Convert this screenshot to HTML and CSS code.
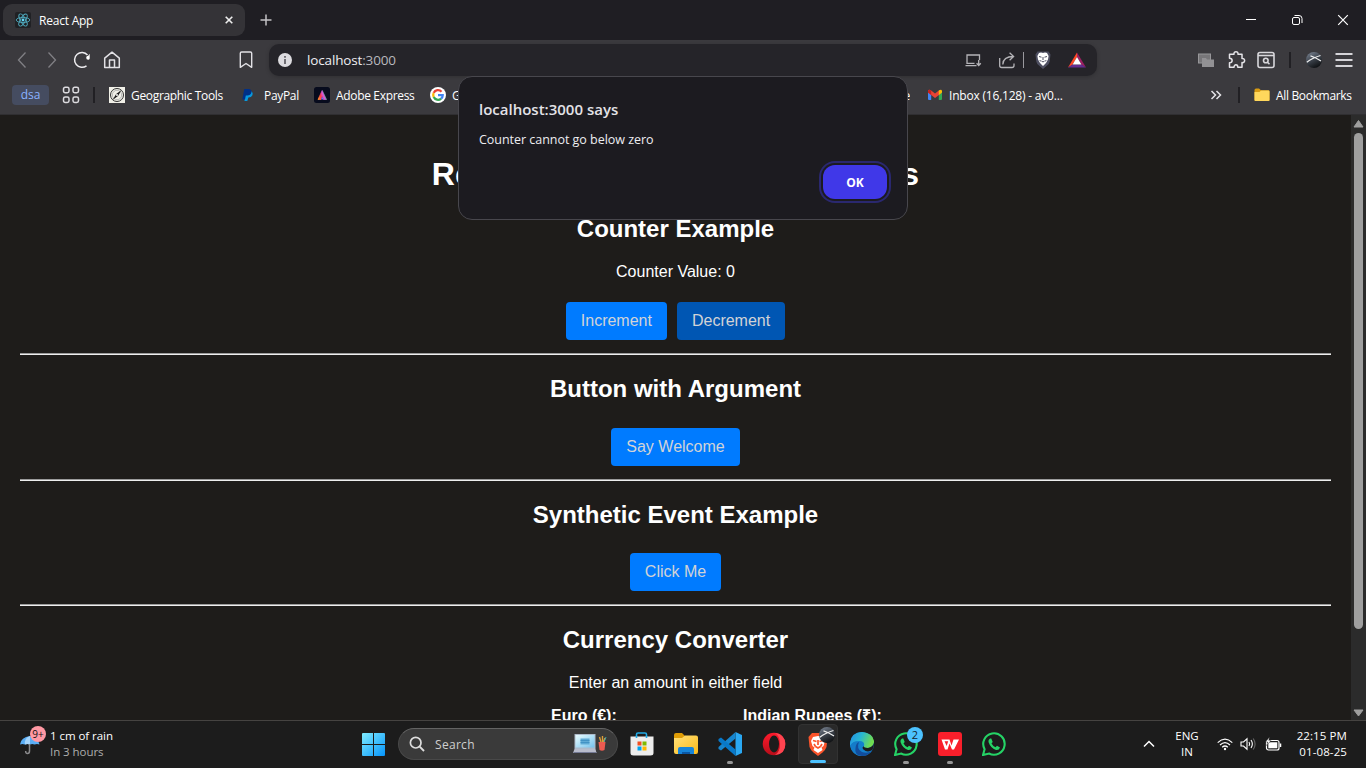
FILE: index.html
```html
<!DOCTYPE html>
<html lang="en">
<head>
<meta charset="utf-8">
<title>React App</title>
<link rel="stylesheet" href="styles.css">
</head>
<body>
<div class="desktop">
  <header class="titlebar">
    <div class="tab">
      <svg class="tab-icon" width="16" height="16" viewBox="0 0 16 16"><rect width="16" height="16" rx="2" fill="#202124"/><g fill="none" stroke="#4fa9bd" stroke-width=".9"><ellipse cx="8" cy="8" rx="6.8" ry="2.6"/><ellipse cx="8" cy="8" rx="6.8" ry="2.6" transform="rotate(60 8 8)"/><ellipse cx="8" cy="8" rx="6.8" ry="2.6" transform="rotate(120 8 8)"/></g><circle cx="8" cy="8" r="1.4" fill="#61dafb"/></svg>
      <span class="tab-title">React App</span>
      <svg class="tab-close" width="8" height="8" viewBox="0 0 8 8"><path d="M.7.7l6.6 6.6M7.3.7L.7 7.3" stroke="#eee" stroke-width="1.6"/></svg>
    </div>
    <svg class="new-tab" width="12" height="12" viewBox="0 0 12 12"><path d="M6 .5v11M.5 6h11" stroke="#c3c2c5" stroke-width="1.5"/></svg>
    <div class="window-controls">
      <svg width="46" height="40" viewBox="0 0 46 40"><path d="M18 19.5h10" stroke="#fff"/></svg>
      <svg width="46" height="40" viewBox="0 0 46 40" fill="none" stroke="#fff"><rect x="18.5" y="17.500" width="7" height="7" rx="1.500"/><path d="M20.500 15.500h4.500a3 3 0 0 1 3 3v4.500"/></svg>
      <svg width="46" height="40" viewBox="0 0 46 40"><path d="M18.200 15.200l9.600 9.600M27.800 15.200l-9.600 9.600" stroke="#fff" stroke-width="1.200"/></svg>
    </div>
  </header>

  <nav class="toolbar">
    <span class="tool"><svg width="20" height="20" viewBox="0 0 20 20"><path d="M13.500 2.500L6.500 10l7 7.500" fill="none" stroke="#818085" stroke-width="1.300"/></svg></span>
    <span class="tool"><svg width="20" height="20" viewBox="0 0 20 20"><path d="M6.500 2.500l7 7.500-7 7.500" fill="none" stroke="#818085" stroke-width="1.300"/></svg></span>
    <span class="tool"><svg width="20" height="20" viewBox="0 0 20 20"><path d="M15.500 5A7.400 7.400 0 1 0 14.500 15.800" fill="none" stroke="#eeedf0" stroke-width="1.500"/><path d="M17.700 3.800v4.700q-.2 1.300-1.500 1.300-2 0-2-2t2-2z" fill="#fff"/></svg></span>
    <span class="tool"><svg width="20" height="20" viewBox="0 0 20 20"><path d="M2.700 8.200L10 2.200l7.300 6v9.300H2.700z M7.500 17v-7h5v7" fill="none" stroke="#e2e1e5" stroke-width="1.500" stroke-linejoin="round"/></svg></span>
    <span class="tool tool-bookmark"><svg width="20" height="20" viewBox="0 0 20 20"><path d="M5.600 2.200h8.800q1.300 0 1.300 1.300v14L10 13.700l-5.700 3.800v-14q0-1.300 1.300-1.300z" transform="translate(0 -.2)" fill="none" stroke="#e2e1e5" stroke-width="1.400" stroke-linejoin="round"/></svg></span>
    <div class="address">
      <svg class="info" width="14" height="14" viewBox="0 0 14 14"><circle cx="7" cy="7" r="7" fill="#dddce0"/><path d="M7 3v1.700M7 6v5" stroke="#55545a" stroke-width="1.600"/></svg>
      <span class="url">localhost<span class="port">:3000</span></span>
      <div class="address-tools">
        <span class="tool"><svg width="20" height="20" viewBox="0 0 20 20" fill="none" stroke="#b5b4b8" stroke-width="1.300"><path d="M11.500 13.300H4V5h12.500v5M2.500 15.600h11M15.700 10v5.500M13.600 13.300l2.100 2.200 2.100-2.200"/></svg></span>
        <span class="tool tool-share"><svg width="20" height="20" viewBox="0 0 20 20" fill="none" stroke="#b5b4b8" stroke-width="1.300"><path d="M2.700 8v7.500q0 2 2 2H15q2 0 2-2v-2M5.800 14.500Q6 6.500 16.500 6.500M12.600 2.800l4 3.700-4 3.800"/></svg></span>
        <span class="address-sep"></span>
        <span class="tool tool-shield"><svg width="20" height="20" viewBox="0 0 20 20"><path d="M4.500 1.500h11l2 3-.8 7q-.5 2.500-2.700 4L10 19l-4-3.500q-2.200-1.500-2.700-4l-.8-7z" fill="#4d4e60"/><path d="M6 3l2-.4 2 .4 2-.4L14 3l1.600 3-.6 3.500-2 3.500L10 16l-3-3-2-3.500L4.400 6z" fill="#fff"/><path d="M6 6.500l2.500.7M14 6.500l-2.500.7M10 7v3M8.500 11l1.500 1 1.500-1M6.800 10l1 1.500M13.200 10l-1 1.500" stroke="#4d4e60" fill="none"/></svg></span>
        <span class="tool tool-bat"><svg width="20" height="18" viewBox="0 0 20 18"><path d="M10 1.500L1 16.500l4.500-2.700L10 6z" fill="#ff4724"/><path d="M10 1.500l9 15-4.500-2.700L10 6z" fill="#9e1f63"/><path d="M1 16.500h18l-4.500-3h-9z" fill="#662d91"/><path d="M10 6l4.400 7.600H5.600z" fill="#fff"/></svg></span>
      </div>
    </div>
    <div class="extensions">
      <span class="tool"><svg width="18" height="16" viewBox="0 0 18 16"><rect x="1.500" y="2" width="12" height="9" fill="#777679" stroke="#98979a"/><path d="M5 6h4l1 1.500h7V15H5z" fill="#929194"/></svg></span>
      <span class="tool"><svg width="20" height="20" viewBox="0 0 20 20"><path d="M3 4.500h4.500c-.5-3.500 4.500-3.500 4 0h4v4.300c3.500-.8 3.500 4.600 0 4v4.700h-4.200c0-3.300-3.800-3.300-3.800 0H3V13c3.500 0 3.500-4.500 0-4.500z" transform="translate(.5 -.2)" fill="none" stroke="#e5e4e8" stroke-width="1.500" stroke-linejoin="round"/></svg></span>
      <span class="tool"><svg width="20" height="20" viewBox="0 0 20 20" fill="none" stroke="#d8d7db" stroke-width="1.600"><rect x="2" y="2.500" width="16" height="15" rx="2"/><path d="M2 5.500h16"/><circle cx="9.800" cy="10.500" r="2.300"/><path d="M11.500 12.200l2 2"/></svg></span>
      <span class="divider"></span>
      <span class="tool"><svg width="16" height="16" viewBox="0 0 16 16"><defs><linearGradient id="orb" x1=".2" x2=".7" y2="1"><stop stop-color="#76808f"/><stop offset=".5" stop-color="#3a4049"/><stop offset="1" stop-color="#0b0d0f"/></linearGradient></defs><circle cx="8" cy="8" r="8" fill="url(#orb)"/><path d="M.8 10.200Q6 6 14.500 3.500M4.500 3.800Q9 5 15 9" fill="none" stroke="#eee" stroke-width="1.200"/></svg></span>
      <span class="tool"><svg width="18" height="16" viewBox="0 0 18 16"><path d="M.5 2h17M.5 8h17M.5 14h17" stroke="#d5d4d8" stroke-width="2"/></svg></span>
    </div>
  </nav>

  <nav class="bookmarks">
    <span class="group-chip">dsa</span>
    <svg class="apps" width="18" height="18" viewBox="0 0 18 18" fill="none" stroke="#dcdbdf" stroke-width="1.500"><rect x="1.500" y="1.200" width="5.500" height="5.500" rx="1.700"/><rect x="11" y="1.200" width="5.500" height="5.500" rx="1.700"/><rect x="1.500" y="11" width="5.500" height="5.500" rx="1.700"/><rect x="11" y="11" width="5.500" height="5.500" rx="1.700"/></svg>
    <span class="divider divider-left"></span>
    <a class="bookmark geo"><svg width="16" height="16" viewBox="0 0 16 16"><rect width="16" height="16" fill="#f1f0e8"/><circle cx="8" cy="8" r="6.500" fill="none" stroke="#303030"/><circle cx="8" cy="8" r="4.700" fill="none" stroke="#aaa" stroke-width=".8"/><path d="M12.500 3L9 9 3.500 13l3.700-6z" fill="#181818"/><circle cx="8" cy="8" r="1" fill="#fff"/></svg><span>Geographic Tools</span></a>
    <a class="bookmark paypal"><svg width="16" height="16" viewBox="0 0 16 16"><path d="M5 4.500h6.800q1.500 1.500.6 3.700-1 2.300-4 2.300L7.300 14H4.500z" fill="#0799df"/><path d="M4.300 2h4.700q3.200.5 2.400 3.500-.8 3-4.200 3H5.800L5 12.500H2.300z" fill="#003087"/></svg><span>PayPal</span></a>
    <a class="bookmark adobe"><svg width="16" height="16" viewBox="0 0 16 16"><defs><linearGradient id="ax" x1="0" y1="1" x2="1" y2=".6"><stop stop-color="#ff9d2e"/><stop offset=".4" stop-color="#ff3a45"/><stop offset=".7" stop-color="#d655df"/><stop offset="1" stop-color="#3ad06b"/></linearGradient></defs><rect width="16" height="16" rx="2.500" fill="#070b1d"/><path d="M8.200 3.500l4.300 9h-3L8.200 9 7 12.500H4z" fill="url(#ax)" stroke="url(#ax)" stroke-width=".8"/><path d="M8 9.500l2 3H7.200z" fill="#6c6dff"/></svg><span>Adobe Express</span></a>
    <a class="bookmark google"><svg width="16" height="16" viewBox="0 0 16 16"><circle cx="8" cy="8" r="8" fill="#fff"/><g fill="none" stroke-width="2.300"><path d="M3.700 5.900A4.700 4.700 0 0 1 11.500 4.700" stroke="#ea4335"/><path d="M3.700 10.100A4.700 4.700 0 0 1 3.700 5.900" stroke="#fbbc05"/><path d="M11.100 11.600a4.700 4.700 0 0 1-7.400-1.500" stroke="#34a853"/><path d="M8 8.200h4.700q0 2.200-1.600 3.400" stroke="#4285f4"/></g></svg><span>Google</span></a>
    <a class="bookmark covered"><span>YouTube</span></a>
    <a class="bookmark mail"><svg width="16" height="16" viewBox="0 0 16 16"><path d="M1 4.500L4.200 6.500V13H2q-1 0-1-1z" fill="#4285f4"/><path d="M15 4.500l-3.200 2V13H14q1 0 1-1z" fill="#34a853"/><path d="M1 4q.5-2 2.500-1L8 6.500 12.500 3l1.500 3.500L8 11 1 5.500z" fill="#ea4335"/><path d="M11.800 3.600Q14.500 1.500 15 4v1.500l-3.200 2.400z" fill="#fbbc04"/><path d="M1 4q.5-2 3.200-.5v4.400L1 5.500z" fill="#c5221f"/></svg><span>Inbox (16,128) - av0...</span></a>
    <svg class="more" width="12" height="12" viewBox="0 0 12 12"><path d="M1.500 2l4 4-4 4M6.500 2l4 4-4 4" fill="none" stroke="#e5e4e8" stroke-width="1.500"/></svg>
    <span class="divider divider-right"></span>
    <a class="bookmark all"><svg width="16" height="16" viewBox="0 0 16 16"><path d="M.5 3q0-1.500 1.500-1.500h3L7 3.300h7.500q1 0 1 1V13q0 1-1 1h-13q-1 0-1-1z" fill="#d99b12"/><path d="M.5 5h5L7 3.600h7.500q1 0 1 1V13q0 1-1 1h-13q-1 0-1-1z" fill="#ffd75c"/></svg><span>All Bookmarks</span></a>
  </nav>

  <div class="viewport">
    <main class="page">
      <h1>React Event Handling Examples</h1>
      <section>
        <h2>Counter Example</h2>
        <p>Counter Value: 0</p>
        <div class="actions"><button>Increment</button><button class="pressed">Decrement</button></div>
      </section>
      <hr>
      <section>
        <h2>Button with Argument</h2>
        <div class="actions"><button>Say Welcome</button></div>
      </section>
      <hr>
      <section>
        <h2>Synthetic Event Example</h2>
        <div class="actions"><button>Click Me</button></div>
      </section>
      <hr>
      <section>
        <h2>Currency Converter</h2>
        <p>Enter an amount in either field</p>
        <div class="fields"><label>Euro (€):</label><label>Indian Rupees (₹):</label></div>
      </section>
    </main>
    <div class="scrollbar">
      <svg width="15" height="18" viewBox="0 0 15 18"><path d="M7.500 5.500L12 12H3z" fill="#9f9f9f" stroke="#9f9f9f" stroke-linejoin="round"/></svg>
      <span class="thumb"></span>
      <svg class="arrow-down" width="15" height="15" viewBox="0 0 15 15"><path d="M3 5h9l-4.500 6z" fill="#9f9f9f" stroke="#9f9f9f" stroke-linejoin="round"/></svg>
    </div>
  </div>

  <footer class="taskbar">
    <div class="weather">
      <div class="weather-icon"><svg width="22" height="22" viewBox="0 0 22 22"><path d="M1 11.500Q2 4 11 3q8 1 9.500 8.500-2.500-1-5 0-2.200-1-4.600 0-2.500-1-5 0-2.500-1-4.900 0z" fill="#5aaef5"/><path d="M11 3Q5 5 6 11.500q2.500-1 5 0z" fill="#a5d5fc"/><path d="M10.500 11v7q0 2.500-2 2.500T6.700 18" fill="none" stroke="#8a8a8c" stroke-width="1.500"/></svg><span class="weather-badge">9+</span></div>
      <div class="weather-text"><span>1 cm of rain</span><span class="muted">In 3 hours</span></div>
    </div>
    <svg class="start" width="23" height="23" viewBox="0 0 23 23"><defs><linearGradient id="win" x2="1" y2="1"><stop stop-color="#7fecff"/><stop offset="1" stop-color="#0594fb"/></linearGradient></defs><path d="M0 1q0-1 1-1h10v11H0zM12 0h10q1 0 1 1v10H12zM0 12h11v11H1q-1 0-1-1zM12 12h11v10q0 1-1 1H12z" fill="url(#win)"/></svg>
    <div class="search">
      <svg width="16" height="16" viewBox="0 0 16 16"><circle cx="6.700" cy="6.700" r="5.300" fill="none" stroke="#ddd" stroke-width="1.700"/><path d="M10.700 10.700l4.300 4.300" stroke="#ddd" stroke-width="1.900"/></svg>
      <span>Search</span>
      <svg class="search-art" width="34" height="22" viewBox="0 0 34 22"><defs><linearGradient id="screen" x2="1" y2="1"><stop stop-color="#e9fdff"/><stop offset="1" stop-color="#75c1ec"/></linearGradient></defs><path d="M1.500 1h21v15h-21z" fill="#adbaca"/><path d="M2.500 2h19v12.500h-19z" fill="url(#screen)"/><path d="M7.500 5.500h9v6h-9z" fill="#5eaad5"/><path d="M7.500 7.500h9M7.500 9.500h9" stroke="#388abf" stroke-width=".7"/><path d="M1.500 16h21l1 4H0z" fill="#b8bccb"/><path d="M.5 19.500h23" stroke="#747a94"/><path d="M28 9l-1.500-5M29.500 9V3M30.500 9l1.500-4" stroke="#dc9f38" stroke-width="1.400"/><path d="M31 9l2-5" stroke="#42aaad"/><path d="M25.500 9h7l-1 8q-2.500 1.500-5 0z" fill="#ec5b51"/></svg>
    </div>
    <div class="apps-row">
      <span class="app"><svg width="24" height="24" viewBox="0 0 24 24"><path d="M6.500 6V2.500Q6.500 1 8 1h7q1.500 0 1.500 1.500V6" fill="none" stroke="#20aae6" stroke-width="1.600"/><path d="M.5 4.500h23V21q0 2.500-3 2.500h-17q-3 0-3-2.500z" fill="#ededed"/><path d="M6.500 6V4M16.500 6V4" stroke="#20aae6" stroke-width="1.600"/><path d="M7.500 9.500h4v4h-4z" fill="#f25022"/><path d="M12.500 9.500h4v4h-4z" fill="#7fba00"/><path d="M7.500 14.500h4v4h-4z" fill="#00a4ef"/><path d="M12.500 14.500h4v4h-4z" fill="#ffb900"/></svg></span>
      <span class="app"><svg width="24" height="24" viewBox="0 0 24 24"><defs><linearGradient id="fold" x2="1" y2="1"><stop stop-color="#ffe17a"/><stop offset="1" stop-color="#fbb918"/></linearGradient></defs><path d="M0 3q0-2 2-2h6l3 3v5H0z" fill="#df9c05"/><path d="M0 6h8l3-2.500h11q2 0 2 2V20q0 2-2 2H2q-2 0-2-2z" fill="url(#fold)"/><path d="M4 22v-5q0-2 2-2h12q2 0 2 2v5z" fill="#1685da"/><path d="M8 20h8v2H8z" fill="#0b57a4"/></svg></span>
      <span class="app"><svg width="24" height="24" viewBox="0 0 24 24"><path d="M17.500 0L24 3v18l-6.500 3z" fill="#2aa8f2"/><path d="M17.500 0v6.500L3 18.500.5 17v-2z" fill="#1685ce"/><path d="M17.500 24v-6.500L3 5.500.5 7v2z" fill="#0879c9"/></svg><i></i></span>
      <span class="app"><svg width="24" height="24" viewBox="0 0 24 24"><defs><linearGradient id="op" x2="0" y2="1"><stop stop-color="#ff1b2d"/><stop offset="1" stop-color="#b70d19"/></linearGradient></defs><circle cx="12" cy="12" r="11.300" fill="url(#op)"/><path d="M13 1q10 1 10.300 11T13 23q5-3 5-11T13 1z" fill="#ff4450"/><ellipse cx="12" cy="12" rx="5" ry="8.500" fill="#1c1c1c"/></svg></span>
      <span class="app active"><svg width="24" height="24" viewBox="0 0 24 24"><path d="M6 1h12l3.500 4-1 10q-1 3-4 5.500L12 24l-4.500-3.500q-3-2.500-4-5.500l-1-10z" fill="#fb542b"/><path d="M7 5l5-1 5 1 2 4-1.500 5-2 1.500 1 2.500L12 21l-4.500-3 1-2.500-2-1.500L5 9z" fill="#fff"/><path d="M7 8.500l3.500 1M17 8.500l-3.500 1M12 8v5M9.500 14.500L12 16l2.500-1.500M8 12l1.500 2.500M16 12l-1.500 2.500" fill="none" stroke="#fb542b" stroke-width="1.700"/></svg><svg class="orb" width="16" height="16" viewBox="0 0 16 16"><circle cx="8" cy="8" r="8" fill="url(#orb)"/><path d="M.8 10.200Q6 6 14.500 3.500M4.500 3.800Q9 5 15 9" fill="none" stroke="#eee" stroke-width="1.200"/></svg><i></i></span>
      <span class="app"><svg width="24" height="24" viewBox="0 0 24 24"><defs><linearGradient id="eg" x2="1" y2=".3"><stop stop-color="#238de5"/><stop offset=".5" stop-color="#28b7d2"/><stop offset="1" stop-color="#70dc50"/></linearGradient></defs><circle cx="12" cy="12" r="12" fill="#1381ce"/><path d="M0 11Q1.500 0 12 0q11 1 12 9 .3 6-6 7-5 .5-4-2 1-5-4.500-5Q3 9 0 14z" fill="url(#eg)"/><path d="M9 10q-5 4-2.500 9 2 4 7.500 5Q3 25 .2 14 3 8 9 10z" fill="#147cc9"/><path d="M9 10q-3 7 3 10 5 2 10-1-4 5-10 5-8-1-6.500-8Q6 11 9 10z" fill="#124d9c"/><path d="M14 14q-1 2 4 2 5-1 5.900-5 .2 4-1.500 7-5 3-9-.5-2-2 .6-3.500z" fill="#1c1c1c"/></svg></span>
      <span class="app"><svg width="24" height="24" viewBox="0 0 24 24"><path d="M1 23l1.600-5.800A10.700 10.700 0 1 1 7 21.500z" fill="none" stroke="#25d366" stroke-width="2.100"/><path d="M8 6.500q-2 1-1.500 3.500 2 6 7.500 8 3 .5 4-2.500l-3-1.700-1.500 1.500q-2.500-1-4-3.700L10.700 10 9.300 6.500z" fill="#25d366"/></svg><b class="count">2</b><i></i></span>
      <span class="app"><svg width="24" height="24" viewBox="0 0 24 24"><rect width="24" height="24" rx="3" fill="#f91f2b"/><path d="M3.500 7.500h8l2 6 2-6H21l-5 10h-2l-2.500-6-2 6H7z" fill="#fff"/><path d="M6.500 9.200L8.700 14l1.500-4.800z" fill="#f91f2b"/></svg><i></i></span>
      <span class="app"><svg width="24" height="24" viewBox="0 0 24 24"><path d="M1 23l1.600-5.800A10.700 10.700 0 1 1 7 21.500z" fill="none" stroke="#25d366" stroke-width="2.100"/><path d="M8 6.500q-2 1-1.500 3.500 2 6 7.500 8 3 .5 4-2.500l-3-1.700-1.500 1.500q-2.500-1-4-3.700L10.700 10 9.300 6.500z" fill="#25d366"/></svg></span>
    </div>
    <div class="tray">
      <svg width="12" height="8" viewBox="0 0 12 8"><path d="M1 6.500l5-5 5 5" fill="none" stroke="#fff" stroke-width="1.500"/></svg>
      <div class="language"><span>ENG</span><span>IN</span></div>
      <svg class="wifi" width="16" height="14" viewBox="0 0 16 14" fill="none" stroke="#fff" stroke-width="1.200"><path d="M.7 5.600Q8-1.400 15.300 5.600M3 8q5-4.700 10 0M5.200 10.300q2.800-2.600 5.600 0"/><circle cx="8" cy="12" r="1.200" fill="#fff" stroke="none"/></svg>
      <svg class="volume" width="17" height="14" viewBox="0 0 17 14" fill="none" stroke="#fff" stroke-width="1.100"><path d="M1 5h2.500L7 1.800v10.400L3.500 9H1zM9 5q1.300 2 0 4M11 3q2.700 4 0 8"/><path d="M13.200 1.500q3.800 5.500 0 11" stroke="#666"/></svg>
      <svg class="battery" width="17" height="15" viewBox="0 0 17 15"><rect x="1.500" y="3.500" width="12.500" height="9.500" rx="2" fill="none" stroke="#fff" stroke-width="1.200"/><path d="M3.300 5.300h9v6h-9z" fill="#fff"/><path d="M15.500 6.500v3.500" stroke="#fff" stroke-width="1.500"/><path d="M4.500 0L.5 5h2.300L1.500 8.500 6 3.500H3.700z" fill="#fff" stroke="#1c1c1c" stroke-width=".4"/></svg>
      <div class="clock"><span>22:15 PM</span><span>01-08-25</span></div>
    </div>
  </footer>

  <div class="dialog" role="alertdialog">
    <div class="dialog-title">localhost:3000 says</div>
    <div class="dialog-message">Counter cannot go below zero</div>
    <div class="dialog-actions"><button class="ok">OK</button></div>
  </div>
</div>
</body>
</html>
```

FILE: styles.css
```css
* { box-sizing: border-box; }
body { margin: 0; overflow: hidden; }
svg { display: block; flex: none; }

.desktop {
  position: relative;
  width: 1366px;
  height: 768px;
  display: flex;
  flex-direction: column;
  overflow: hidden;
  background: #1e1c1a;
  color: #fff;
  font-family: "Open Sans", "Noto Sans", sans-serif;
  font-size: 12px;
  white-space: nowrap;
}

/* Window title bar */
.titlebar { height: 40px; flex: none; display: flex; align-items: center; background: #1f1e23; padding-left: 3px; }
.tab { width: 242px; height: 32px; border-radius: 9px; background: #343337; display: flex; align-items: center; padding: 0 12px; }
.tab-title { margin-left: 8px; letter-spacing: -0.22px; }
.tab-close { margin-left: auto; }
.new-tab { margin-left: 15px; }
.window-controls { display: flex; margin-left: auto; }

/* Navigation row */
.toolbar { height: 40px; flex: none; display: flex; align-items: center; background: #3b3a3e; padding: 0 7px; }
.tool { width: 30px; height: 30px; flex: none; display: flex; align-items: center; justify-content: center; }
.tool-bookmark { margin-left: 104px; }
.address { width: 828px; height: 32px; margin-left: 8px; border-radius: 10px; background: #252429; display: flex; align-items: center; padding: 0 5px 0 9px; box-shadow: 0 1px 4px #0003; }
.url { margin-left: 15px; font-size: 13.500px; letter-spacing: -0.15px; color: #efeef2; }
.port { color: #b9b8be; }
.address-tools { margin-left: auto; display: flex; align-items: center; }
.tool-share { margin-left: 4px; }
.address-sep { width: 1px; height: 16px; margin-left: 1px; background: #9a999e; }
.tool-shield { margin-left: 4px; }
.tool-bat { margin-left: 4px; }
.extensions { margin-left: auto; display: flex; align-items: center; }
.divider { width: 2px; height: 16px; flex: none; background: #212024; }
.extensions .divider { margin: 0 8px; }

/* Bookmarks row */
.bookmarks { height: 35px; flex: none; display: flex; align-items: center; background: #3b3a3e; border-bottom: 1px solid #302f32; padding: 0 0 4px 12px; }
.group-chip { width: 37px; height: 20px; border-radius: 4px; background: #454c60; color: #8ab2ff; text-align: center; line-height: 19px; }
.apps { margin-left: 13px; }
.divider-left { margin: 0 14px 0 13px; }
.bookmark { display: flex; align-items: center; flex: none; gap: 6px; overflow: hidden; letter-spacing: -0.33px; }
.geo { width: 131px; }
.paypal { width: 74px; gap: 8px; }
.adobe { width: 116px; }
.google { width: 60px; }
.covered { width: 420px; justify-content: flex-end; }
.mail { width: 283px; margin-left: 17px; letter-spacing: -0.2px; }
.divider-right { margin: 0 14px 0 16px; }

/* Web page */
.viewport { flex: 1; min-height: 0; display: flex; overflow: hidden; background: #1e1c1a; }
.page { flex: 1; padding: 0 20px; text-align: center; font-family: "Liberation Sans", Arial, sans-serif; font-size: 16px; overflow: hidden; }
h1 { margin: 41px 0 20px; font-size: 32px; line-height: 37px; }
h2 { margin: 20px 0 19.800px; font-size: 24px; line-height: 28px; }
p { margin: 0; line-height: 18px; }
h1 + section h2 { margin-top: 22px; }
.actions { display: flex; justify-content: center; gap: 10px; padding: 5px 0 13px; }
p + .actions { padding-top: 21px; }
.page button { height: 38px; border: 0; border-radius: 4px; background: #007bff; color: #d2d3d6; padding: 0 15px; font: 16px "Liberation Sans", Arial, sans-serif; }
.page .pressed { background: #0056b3; }
hr { margin: 0; border: 0; height: 2px; border-top: 1px solid #9a9a9a; border-bottom: 1px solid #eee; }
.fields { display: flex; justify-content: flex-start; padding: 15px 0 0 531px; font-weight: 700; line-height: 18px; text-align: left; }
.fields label { width: 192px; }
.scrollbar { width: 15px; flex: none; display: flex; flex-direction: column; align-items: center; background: #2b2b2b; }
.thumb { width: 9px; height: 496px; border-radius: 5px; background: #9f9f9f; }
.arrow-down { margin-top: auto; }

/* Taskbar */
.taskbar { height: 48px; flex: none; display: flex; align-items: center; padding-bottom: 1px; border-top: 1px solid #454341; background: #1c1c1c; }
.weather { width: 342px; margin-left: 19px; display: flex; align-items: center; }
.weather-icon { position: relative; width: 31px; height: 22px; }
.weather-badge { position: absolute; left: 11px; top: -7px; width: 16px; height: 16px; border-radius: 50%; background: #ff99a4; color: #111; font-size: 10px; line-height: 16px; text-align: center; }
.weather-text, .language, .clock { display: flex; flex-direction: column; line-height: 16px; font-size: 11.500px; letter-spacing: -0.05px; }
.weather-text, .clock { padding-bottom: 1px; }
.muted { color: #adadad; }
.start { margin-left: 1px; }
.search { width: 220px; height: 32px; margin-left: 13px; border-radius: 16px; background: #3a3a3a; border: 1px solid #484848; border-top-color: #646464; display: flex; align-items: center; padding: 0 10px 0 10px; color: #cfcfcf; letter-spacing: 0.3px; }
.search span { margin-left: 10px; }
.search-art { margin-left: auto; }
.apps-row { display: flex; margin-left: 2px; }
.app { position: relative; width: 40px; height: 40px; margin: 0 2px; display: flex; align-items: center; justify-content: center; border-radius: 4px; }
.app i { position: absolute; bottom: 0; left: 17px; width: 6px; height: 3px; border-radius: 2px; background: #969696; }
.active { background: #292929; border: 1px solid #323232; }
.active i { left: 11px; bottom: 0; width: 16px; background: #4cc2ff; }
.orb { position: absolute; left: 20px; top: 2px; }
.count { position: absolute; left: 21px; top: 3px; width: 16px; height: 16px; border-radius: 50%; background: #4cc2ff; color: #14242e; font-size: 11px; font-weight: 400; line-height: 16px; text-align: center; }
.tray { margin: 0 19px 0 auto; display: flex; align-items: center; }
.language { width: 26px; margin-left: 19px; align-items: center; }
.wifi { margin-left: 17px; }
.volume { margin-left: 7px; }
.battery { margin-left: 8px; }
.clock { width: 51px; margin-left: 14px; align-items: flex-end; letter-spacing: 0.1px; }

/* Alert dialog */
.dialog { position: absolute; left: 458px; top: 76px; width: 450px; height: 144px; border: 1px solid #48474d; border-radius: 14px; background: #1c1b20; padding: 21px 20px; display: flex; flex-direction: column; }
.dialog-title { font-size: 15px; font-weight: 600; line-height: 22px; color: #e3e2e7; letter-spacing: 0; }
.dialog-message { margin-top: 11px; font-size: 12.500px; line-height: 18px; color: #ededf1; letter-spacing: -0.03px; }
.dialog-actions { display: flex; justify-content: flex-end; margin-top: 16px; }
.ok { width: 64px; height: 34px; border: 0; border-radius: 12px; background: #4038e8; color: #fff; font: 700 12px "Open Sans", sans-serif; box-shadow: 0 0 0 2px #1c1b20, 0 0 0 4px #2a286f; }
```
